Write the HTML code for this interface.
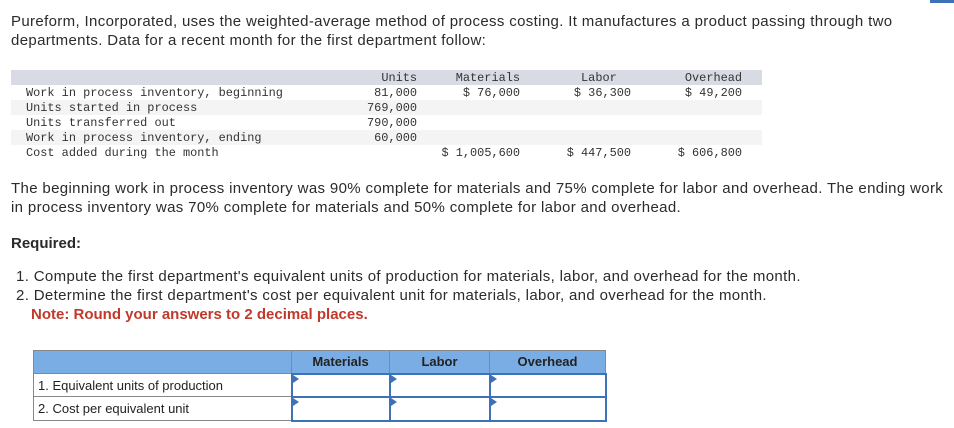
<!DOCTYPE html>
<html><head><style>
body{margin:0;width:954px;height:428px;background:#fff;position:relative;overflow:hidden;font-family:"Liberation Sans",sans-serif;color:#2b2b2b}
.p{position:absolute;left:11px;width:940px;font-size:15px;letter-spacing:0.35px;line-height:19px;margin:0}
.m{position:absolute;font-family:"Liberation Mono",monospace;font-size:11.9px;line-height:15px;color:#333;white-space:pre}
.band{position:absolute;left:11px;width:751px;height:15px}
.r{text-align:right}
table{position:absolute;left:33px;top:350px;border-collapse:collapse;font-size:13px;color:#222;table-layout:fixed;width:572px}
td{border:1px solid #888;padding:0 4px;height:21px;box-sizing:border-box}
th{background:#7aade3;border:1px solid #888;font-weight:bold;height:23px;color:#222;font-size:13px;box-sizing:border-box}
.in{border:2px solid #3d72b8;position:relative;padding:0}
.in:before{content:"";position:absolute;left:0;top:0;border-left:6px solid #3d72b8;border-top:4px solid transparent;border-bottom:4px solid transparent}
</style></head><body>
<div style="position:absolute;left:930px;top:0;width:24px;height:3px;background:#3d72b8"></div>
<p class="p" style="top:12px">Pureform, Incorporated, uses the weighted-average method of process costing. It manufactures a product passing through two departments. Data for a recent month for the first department follow:</p>
<div class="band" style="top:70px;background:#d8dbe3"></div>
<div class="band" style="top:100px;background:#f4f4f4"></div>
<div class="band" style="top:130px;background:#f4f4f4"></div>
<div class="m" style="left:26px;top:86px">Work in process inventory, beginning
Units started in process
Units transferred out
Work in process inventory, ending
Cost added during the month</div>
<div class="m r" style="left:340px;width:77px;top:71px">Units
81,000
769,000
790,000
60,000</div>
<div class="m r" style="left:420px;width:100px;top:71px">Materials
$ 76,000



$ 1,005,600</div>
<div class="m r" style="left:540px;width:91px;top:71px">Labor  
$ 36,300



$ 447,500</div>
<div class="m r" style="left:640px;width:102px;top:71px">Overhead
$ 49,200



$ 606,800</div>
<p class="p" style="top:179px">The beginning work in process inventory was 90% complete for materials and 75% complete for labor and overhead. The ending work in process inventory was 70% complete for materials and 50% complete for labor and overhead.</p>
<p class="p" style="top:234px;font-weight:bold;letter-spacing:0">Required:</p>
<p class="p" style="top:267px;left:16px">1. Compute the first department's equivalent units of production for materials, labor, and overhead for the month.<br>2. Determine the first department's cost per equivalent unit for materials, labor, and overhead for the month.<br><b style="color:#c0392b;margin-left:15px;letter-spacing:0">Note: Round your answers to 2 decimal places.</b></p>
<table>
<tr><th style="width:258px"></th><th style="width:98px">Materials</th><th style="width:100px">Labor</th><th style="width:116px">Overhead</th></tr>
<tr><td style="height:23px">1. Equivalent units of production</td><td class="in"></td><td class="in"></td><td class="in"></td></tr>
<tr><td style="height:24px">2. Cost per equivalent unit</td><td class="in"></td><td class="in"></td><td class="in"></td></tr>
</table>
</body></html>
